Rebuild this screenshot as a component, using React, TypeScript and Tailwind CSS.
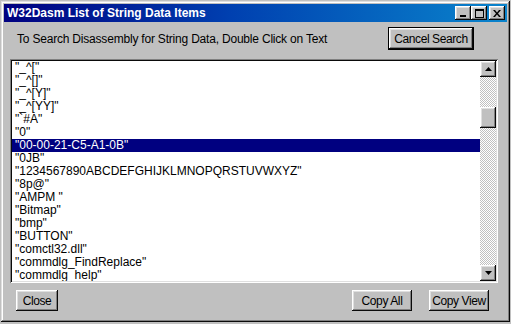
const ITEMS = [
  '"_^["',
  '"_^[]"',
  '"_^[Y]"',
  '"_^[YY]"',
  '"`#A"',
  '"0"',
  '"00-00-21-C5-A1-0B"',
  '"0JB"',
  '"1234567890ABCDEFGHIJKLMNOPQRSTUVWXYZ"',
  '"8p@"',
  '"AMPM "',
  '"Bitmap"',
  '"bmp"',
  '"BUTTON"',
  '"comctl32.dll"',
  '"commdlg_FindReplace"',
  '"commdlg_help"',
];

const SELECTED = 6;

const raised =
  "bg-[#c0c0c0] shadow-[inset_-1px_-1px_#0a0a0a,inset_1px_1px_#ffffff,inset_-2px_-2px_#808080,inset_2px_2px_#dfdfdf]";

function TitleButton({ children }: { children: React.ReactNode }) {
  return (
    <div className={`flex h-[14px] w-[16px] items-center justify-center ${raised}`}>
      {children}
    </div>
  );
}

function Button({ label, className = "" }: { label: string; className?: string }) {
  return (
    <div
      className={`flex h-[21px] items-center justify-center text-[12px] tracking-[-0.4px] text-black ${raised} ${className}`}
    >
      {label}
    </div>
  );
}

function Arrow({ up }: { up?: boolean }) {
  return (
    <div className={`flex h-[16px] w-[16px] flex-none items-center justify-center ${raised}`}>
      <svg width="7" height="4" viewBox="0 0 7 4">
        {up ? <path d="M3.5 0 L7 4 L0 4 Z" fill="#000" /> : <path d="M0 0 L7 0 L3.5 4 Z" fill="#000" />}
      </svg>
    </div>
  );
}

export default function App() {
  return (
    <div className="h-[324px] w-[511px] overflow-hidden bg-[#c0c0c0] pl-[1px] pt-[1px] font-['Liberation_Sans',Arial,sans-serif]">
      <div className="flex h-[321px] w-[509px] flex-col bg-[#c0c0c0] p-[3px] shadow-[inset_-1px_-1px_#0a0a0a,inset_1px_1px_#dfdfdf,inset_-2px_-2px_#808080,inset_2px_2px_#ffffff]">
        <div className="flex h-[18px] flex-none items-center justify-between bg-[linear-gradient(90deg,#000080_0%,#0040b0_45%,#0a84cc_100%)] pl-[3px] pr-[2px]">
          <div className="text-[12px] font-bold leading-none text-white">
            W32Dasm List of String Data Items
          </div>
          <div className="flex items-center">
            <TitleButton>
              <svg width="8" height="8" viewBox="0 0 8 8">
                <rect x="1" y="6" width="6" height="2" fill="#000" />
              </svg>
            </TitleButton>
            <TitleButton>
              <svg width="9" height="9" viewBox="0 0 9 9">
                <path d="M0 0 H9 V9 H0 Z M1 2 V8 H8 V2 Z" fill="#000" fillRule="evenodd" />
              </svg>
            </TitleButton>
            <div className="ml-[2px]">
              <TitleButton>
                <svg width="8" height="7" viewBox="0 0 8 7">
                  <path d="M0 0 L2 0 L4 2.5 L6 0 L8 0 L5 3.5 L8 7 L6 7 L4 4.5 L2 7 L0 7 L3 3.5 Z" fill="#000" />
                </svg>
              </TitleButton>
            </div>
          </div>
        </div>

        <div className="mt-[5px] flex items-center justify-between pl-[13px] pr-[33px]">
          <div className="text-[12px] tracking-[-0.2px] text-black">
            To Search Disassembly for String Data, Double Click on Text
          </div>
          <div className="border border-black">
            <Button label="Cancel Search" className="w-[84px]" />
          </div>
        </div>

        <div className="ml-[6px] mr-[9px] mt-[9px] flex h-[224px] bg-white p-[2px] shadow-[inset_1px_1px_#808080,inset_-1px_-1px_#ffffff,inset_2px_2px_#0a0a0a,inset_-2px_-2px_#dfdfdf]">
          <div className="min-w-0 flex-1 overflow-hidden">
            {ITEMS.map((item, i) => (
              <div
                key={item}
                className={
                  i === SELECTED
                    ? "h-[13px] whitespace-pre bg-[#000080] pl-[3px] text-[12px] leading-[13px] text-white"
                    : "h-[13px] whitespace-pre pl-[3px] text-[12px] leading-[13px] text-black"
                }
              >
                {item}
              </div>
            ))}
          </div>
          <div className="flex w-[16px] flex-none flex-col bg-[repeating-conic-gradient(#c0c0c0_0%_25%,#ffffff_0%_50%)] bg-[length:2px_2px]">
            <Arrow up />
            <div className="mt-[30px] h-[21px] w-[16px] bg-[#c0c0c0] shadow-[inset_-1px_-1px_#0a0a0a,inset_1px_1px_#ffffff,inset_-2px_-2px_#808080,inset_2px_2px_#dfdfdf]" />
            <div className="flex-1" />
            <Arrow />
          </div>
        </div>

        <div className="mt-[7px] flex items-center pl-[12px] pr-[18px]">
          <Button label="Close" className="w-[42px]" />
          <div className="flex-1" />
          <Button label="Copy All" className="w-[60px]" />
          <Button label="Copy View" className="ml-[17px] w-[60px]" />
        </div>
      </div>
    </div>
  );
}
